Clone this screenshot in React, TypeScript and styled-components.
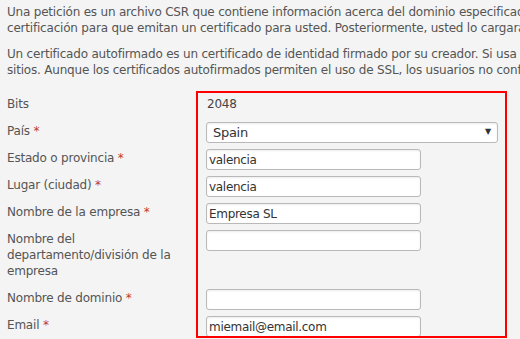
import React from 'react'
import styled, { createGlobalStyle } from 'styled-components'

const GlobalStyle = createGlobalStyle`
  html, body {
    margin: 0;
    padding: 0;
    background: #f4f4f4;
    overflow: hidden;
  }
  body {
    font-family: "DejaVu Sans", Verdana, sans-serif;
    font-size: 12px;
    letter-spacing: -0.2px;
    color: #555;
  }
`

interface Field {
  label: string
  required?: boolean
  kind: 'text' | 'select' | 'input'
  value?: string
}

const fields: Field[] = [
  { label: 'Bits', kind: 'text', value: '2048' },
  { label: 'País', required: true, kind: 'select', value: 'Spain' },
  { label: 'Estado o provincia', required: true, kind: 'input', value: 'valencia' },
  { label: 'Lugar (ciudad)', required: true, kind: 'input', value: 'valencia' },
  { label: 'Nombre de la empresa', required: true, kind: 'input', value: 'Empresa SL' },
  { label: 'Nombre del departamento/división de la empresa', kind: 'input', value: '' },
  { label: 'Nombre de dominio', required: true, kind: 'input', value: '' },
  { label: 'Email', required: true, kind: 'input', value: 'miemail@email.com' },
]

export default function App() {
  return (
    <Page>
      <GlobalStyle />
      <Intro>
        Una petición es un archivo CSR que contiene información acerca del dominio especificado y de su empresa. Debe enviarlo a una autoridad de
        <br />
        certificación para que emitan un certificado para usted. Posteriormente, usted lo cargará en el servidor.
      </Intro>
      <Intro>
        Un certificado autofirmado es un certificado de identidad firmado por su creador. Si usa un certificado de este tipo para proteger sus
        <br />
        sitios. Aunque los certificados autofirmados permiten el uso de SSL, los usuarios no confiarán en ellos.
      </Intro>
      <Form>
        <Highlight />
        {fields.map((f, i) => (
          <Row key={i}>
            <Label>
              {f.label}
              {f.required && <Req> *</Req>}
            </Label>
            <Value>
              {f.kind === 'text' && <Plain>{f.value}</Plain>}
              {f.kind === 'select' && (
                <SelectWrap>
                  <Select defaultValue={f.value}>
                    <option>Spain</option>
                  </Select>
                  <Arrow>▼</Arrow>
                </SelectWrap>
              )}
              {f.kind === 'input' && <Input defaultValue={f.value} />}
            </Value>
          </Row>
        ))}
      </Form>
    </Page>
  )
}

const Page = styled.div`
  width: 900px;
  padding: 4px 7px;
`
const Intro = styled.p`
  margin: 0 0 10px;
  line-height: 16px;
  white-space: nowrap;
`
const Form = styled.div`
  position: relative;
  margin-top: 17px;
  display: flex;
  flex-direction: column;
`
const Highlight = styled.div`
  position: absolute;
  left: 189px;
  top: -4px;
  width: 307px;
  height: 243px;
  border: 2px solid #ff0000;
  pointer-events: none;
`
const Row = styled.div`
  display: grid;
  grid-template-columns: 199px 1fr;
  align-items: start;
`
const Label = styled.div`
  padding: 1px 0 10px;
  line-height: 16px;
  width: 175px;
`
const Req = styled.span`
  color: #c0392b;
`
const Value = styled.div`
  display: flex;
`
const Plain = styled.span`
  line-height: 16px;
  padding: 1px 0 0 1px;
  color: #444;
`
const SelectWrap = styled.div`
  position: relative;
  width: 292px;
`
const Select = styled.select`
  appearance: none;
  width: 100%;
  height: 21px;
  box-sizing: border-box;
  border: 1px solid #b9b9b9;
  border-radius: 3px;
  background: #fff;
  font-family: inherit;
  font-size: 13px;
  letter-spacing: -0.3px;
  color: #333;
  padding: 0 0 0 6px;
  box-shadow: inset 0 1px 2px rgba(0, 0, 0, 0.08);
`
const Arrow = styled.span`
  position: absolute;
  right: 7px;
  top: 5px;
  font-size: 8px;
  color: #333;
  pointer-events: none;
`
const Input = styled.input`
  width: 215px;
  height: 21px;
  box-sizing: border-box;
  border: 1px solid #b9b9b9;
  border-radius: 3px;
  background: #fff;
  font-family: inherit;
  font-size: 12px;
  letter-spacing: -0.3px;
  color: #333;
  padding: 0 2px;
  box-shadow: inset 0 1px 2px rgba(0, 0, 0, 0.08);
`
